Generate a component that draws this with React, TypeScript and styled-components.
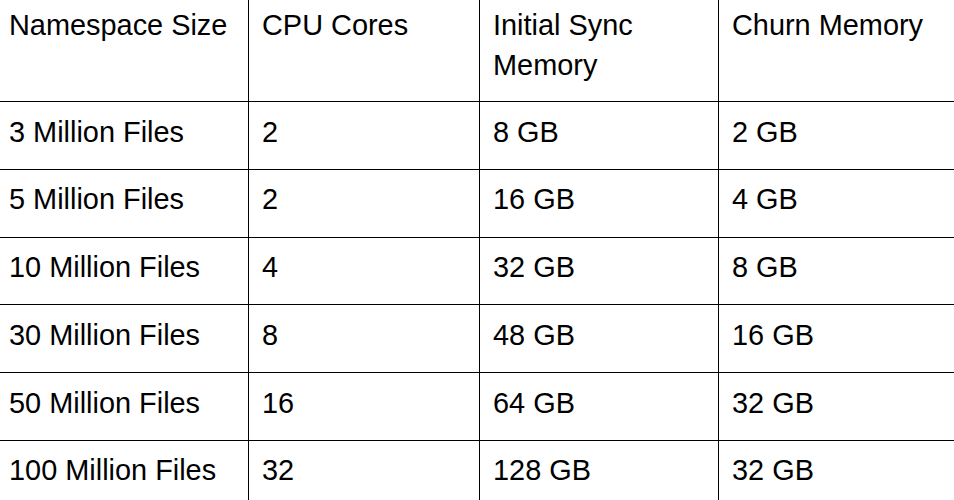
import React from "react";
import styled, { createGlobalStyle } from "styled-components";

const GlobalStyle = createGlobalStyle`
  html, body {
    margin: 0;
    padding: 0;
    background: #ffffff;
    overflow: hidden;
  }
  body {
    font-family: "Liberation Sans", Arial, Helvetica, sans-serif;
    color: #000000;
  }
`;

const Table = styled.table`
  border-collapse: collapse;
  table-layout: fixed;
  width: 968px;
  margin: -6px 0 0 -5px;
  font-family: "Liberation Sans", Arial, Helvetica, sans-serif;
  font-size: 28.9px;
  line-height: 40px;
  color: #000;
`;

const Col = styled.col<{ $w: number }>`
  width: ${(p) => p.$w}px;
`;

const HeadRow = styled.tr`
  height: 107px;
`;

const BodyRow = styled.tr`
  height: 67.8px;
`;

const Cell = styled.td`
  border: 1px solid #000;
  padding: 9.5px 11px 0 13px;
  vertical-align: top;
  text-align: left;
  font-weight: 400;
  white-space: normal;
`;

const HeadCell = styled(Cell).attrs({ as: "th" })``;

const headers = ["Namespace Size", "CPU Cores", "Initial Sync Memory", "Churn Memory"];

const rows: string[][] = [
  ["3 Million Files", "2", "8 GB", "2 GB"],
  ["5 Million Files", "2", "16 GB", "4 GB"],
  ["10 Million Files", "4", "32 GB", "8 GB"],
  ["30 Million Files", "8", "48 GB", "16 GB"],
  ["50 Million Files", "16", "64 GB", "32 GB"],
  ["100 Million Files", "32", "128 GB", "32 GB"],
];

const widths = [253, 231, 239, 245];

export default function App() {
  return (
    <>
      <GlobalStyle />
      <Table>
        <colgroup>
          {widths.map((w, i) => (
            <Col key={i} $w={w} />
          ))}
        </colgroup>
        <thead>
          <HeadRow>
            {headers.map((h) => (
              <HeadCell key={h}>{h}</HeadCell>
            ))}
          </HeadRow>
        </thead>
        <tbody>
          {rows.map((r, i) => (
            <BodyRow key={i}>
              {r.map((c, j) => (
                <Cell key={j}>{c}</Cell>
              ))}
            </BodyRow>
          ))}
        </tbody>
      </Table>
    </>
  );
}
